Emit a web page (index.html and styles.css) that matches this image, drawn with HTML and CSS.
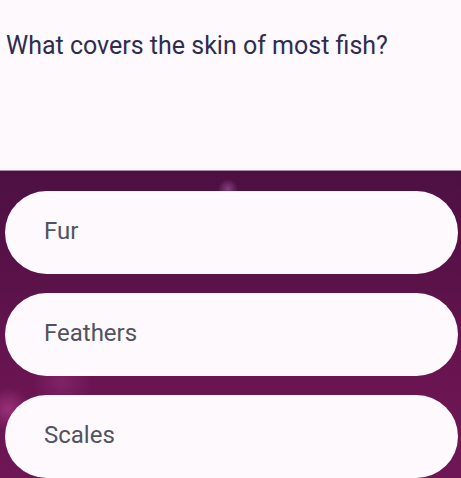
FILE: index.html
```html
<!DOCTYPE html>
<html lang="en">
<head>
<meta charset="utf-8">
<title>Quiz</title>
<link rel="stylesheet" href="styles.css">
</head>
<body>
<main class="quiz">
  <section class="question">
    <h1 class="question-text">What covers the skin of most fish?</h1>
  </section>
  <section class="answers">
    <button class="answer">Fur</button>
    <button class="answer">Feathers</button>
    <button class="answer">Scales</button>
  </section>
</main>
</body>
</html>
```

FILE: styles.css
```css
html, body {
  margin: 0;
  padding: 0;
  height: 100%;
  background: #fdf9fd;
  overflow: hidden;
}
.quiz {
  display: flex;
  flex-direction: column;
  height: 100%;
  font-family: Roboto, "Noto Sans", sans-serif;
}
.question {
  height: 170px;
  box-sizing: border-box;
  padding: 31px 0 0 6px;
  background: #fdf9fd;
}
.question-text {
  margin: 0;
  font-size: 25px;
  font-weight: 400;
  line-height: 30px;
  color: #2f2c50;
  letter-spacing: 0;
}
.answers {
  flex: 1;
  display: flex;
  flex-direction: column;
  gap: 19px;
  padding: 20px 3px 0 5px;
  border-top: 1px solid #b58aab;
  background:
    radial-gradient(circle at 8px 238px, rgba(190, 70, 150, 0.55) 0, rgba(190, 70, 150, 0) 22px),
    radial-gradient(circle at 62px 210px, rgba(170, 60, 140, 0.35) 0, rgba(170, 60, 140, 0) 30px),
    radial-gradient(circle at 228px 18px, rgba(200, 120, 200, 0.45) 0, rgba(200, 120, 200, 0) 10px),
    linear-gradient(180deg, #4d1043 0%, #5a1249 35%, #6a1552 70%, #6f1655 100%);
}
.answer {
  display: flex;
  align-items: center;
  height: 83px;
  flex: none;
  border: none;
  border-radius: 42px;
  background: #fdf9fd;
  padding: 0 0 3px 39px;
  font-family: Roboto, "Noto Sans", sans-serif;
  font-size: 24px;
  color: #51535f;
  text-align: left;
  cursor: pointer;
}
```
